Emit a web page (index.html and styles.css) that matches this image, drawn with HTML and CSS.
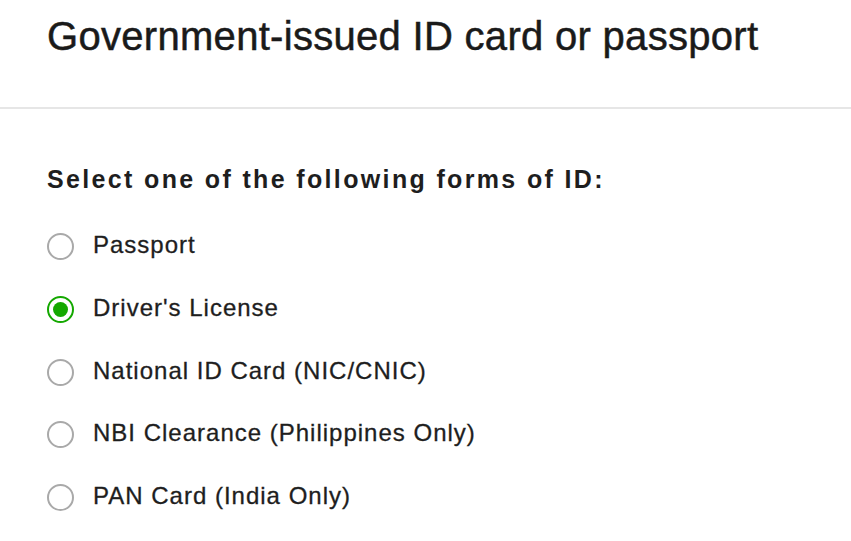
FILE: index.html
```html
<!DOCTYPE html>
<html lang="en">
<head>
<meta charset="utf-8">
<title>Government-issued ID card or passport</title>
<link rel="stylesheet" href="styles.css">
</head>
<body>
  <header class="header">
    <h1 class="title">Government-issued ID card or passport</h1>
  </header>
  <section class="content">
    <p class="prompt">Select one of the following forms of ID:</p>
    <div class="options">
      <label class="option"><span class="radio"></span><span class="option-text">Passport</span></label>
      <label class="option"><span class="radio radio-checked"><span class="dot"></span></span><span class="option-text">Driver's License</span></label>
      <label class="option"><span class="radio"></span><span class="option-text">National ID Card (NIC/CNIC)</span></label>
      <label class="option"><span class="radio"></span><span class="option-text">NBI Clearance (Philippines Only)</span></label>
      <label class="option"><span class="radio"></span><span class="option-text">PAN Card (India Only)</span></label>
    </div>
  </section>
</body>
</html>
```
FILE: styles.css
```css
html, body {
  margin: 0;
  padding: 0;
  background: #ffffff;
}
body {
  font-family: "Liberation Sans", Arial, sans-serif;
  color: #1c1c1c;
  padding-bottom: 30px;
}
.header {
  padding: 16px 47px 0;
  height: 91px;
  border-bottom: 2px solid #e6e6e6;
}
.title {
  margin: 0;
  font-size: 40px;
  line-height: 40px;
  font-weight: 400;
  letter-spacing: 0.3px;
  color: #1a1a1a;
  -webkit-text-stroke: 0.5px #1a1a1a;
}
.content {
  padding: 58px 47px 0;
}
.prompt {
  margin: 0;
  font-size: 25px;
  line-height: 25px;
  font-weight: 700;
  letter-spacing: 2.35px;
  color: #1e1e1e;
}
.options {
  margin-top: 39px;
  display: flex;
  flex-direction: column;
  gap: 33.75px;
}
.option {
  display: flex;
  align-items: flex-start;
  height: 29px;
  gap: 19px;
}
.radio {
  box-sizing: border-box;
  width: 27px;
  height: 27px;
  align-self: flex-end;
  border: 2px solid #a9a9a9;
  border-radius: 50%;
  flex: none;
  display: flex;
  align-items: center;
  justify-content: center;
  background: #fff;
}
.radio-checked {
  border-color: #14a800;
}
.dot {
  width: 15px;
  height: 15px;
  border-radius: 50%;
  background: #14a800;
}
.option-text {
  font-size: 24px;
  line-height: 27px;
  letter-spacing: 1px;
  color: #1e1e1e;
  -webkit-text-stroke: 0.3px #1e1e1e;
}
```
